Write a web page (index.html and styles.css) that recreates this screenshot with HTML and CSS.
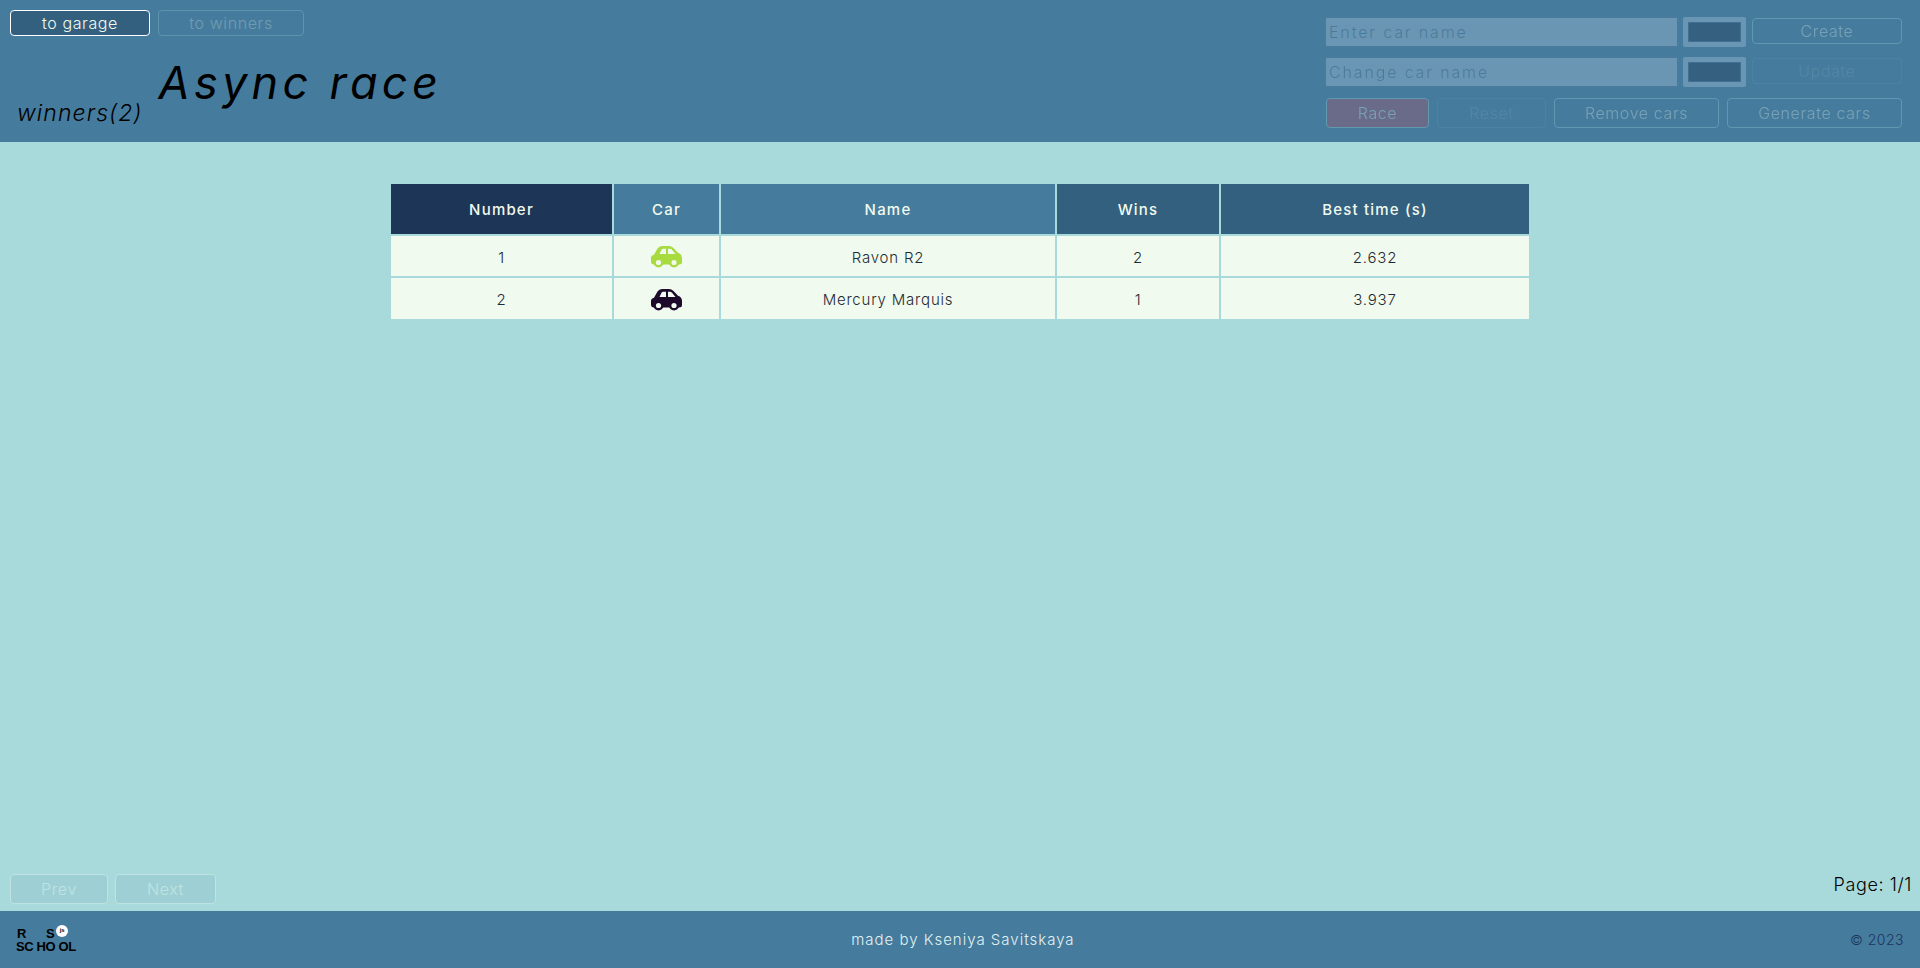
FILE: index.html
```html
<!DOCTYPE html>
<html lang="en">
<head>
    <meta charset="UTF-8">
    <meta name="viewport" content="width=device-width, initial-scale=1.0">
    <title>Async race</title>
    <link rel="stylesheet" href="styles.css">
</head>
<body>
    <header class="header">
        <div class="header-left">
            <nav class="nav">
                <button class="btn btn-garage">to garage</button>
                <button class="btn btn-winners" disabled>to winners</button>
            </nav>
            <div class="titles">
                <h2 class="page-title">winners(2)</h2>
                <h1 class="main-title">Async race</h1>
            </div>
        </div>
        <div class="controls">
            <div class="control-row">
                <input class="car-input" type="text" placeholder="Enter car name">
                <span class="color-box"><span class="color-fill"></span></span>
                <button class="btn btn-side">Create</button>
            </div>
            <div class="control-row">
                <input class="car-input" type="text" placeholder="Change car name">
                <span class="color-box"><span class="color-fill"></span></span>
                <button class="btn btn-side btn-off">Update</button>
            </div>
            <div class="action-row">
                <button class="btn btn-race">Race</button>
                <button class="btn btn-reset btn-off">Reset</button>
                <button class="btn btn-remove">Remove cars</button>
                <button class="btn btn-generate">Generate cars</button>
            </div>
        </div>
    </header>
    <main class="main">
        <table class="winners">
            <thead>
                <tr>
                    <th class="col-number">Number</th>
                    <th class="col-car">Car</th>
                    <th class="col-name">Name</th>
                    <th class="col-wins">Wins</th>
                    <th class="col-time">Best time (s)</th>
                </tr>
            </thead>
            <tbody>
                <tr>
                    <td>1</td>
                    <td>
                        <svg class="car car-green" viewBox="0 0 31 22">
                            <path class="car-body" d="M3 18.500Q0 18.500 0 15.500V12Q0 9.500 3 8.800L6.500 2.500Q8 0 11 0H18Q20.500 0 22.500 2L27 6.800Q31 8 31 12V16Q31 18.500 28 18.500Z"/>
                            <path class="car-glass" d="M8.500 8L10.500 3.800Q11 2.800 12 2.800H15V8ZM17 2.800H19Q20 2.800 20.800 3.600L24.500 8H17Z"/>
                            <circle class="car-body" cx="7.500" cy="16.500" r="5"/>
                            <circle class="car-body" cx="23" cy="16.500" r="5"/>
                            <circle class="car-glass" cx="7.500" cy="16.500" r="2.600"/>
                            <circle class="car-glass" cx="23" cy="16.500" r="2.600"/>
                        </svg>
                    </td>
                    <td>Ravon R2</td>
                    <td>2</td>
                    <td>2.632</td>
                </tr>
                <tr>
                    <td>2</td>
                    <td>
                        <svg class="car car-dark" viewBox="0 0 31 22">
                            <path class="car-body" d="M3 18.500Q0 18.500 0 15.500V12Q0 9.500 3 8.800L6.500 2.500Q8 0 11 0H18Q20.500 0 22.500 2L27 6.800Q31 8 31 12V16Q31 18.500 28 18.500Z"/>
                            <path class="car-glass" d="M8.500 8L10.500 3.800Q11 2.800 12 2.800H15V8ZM17 2.800H19Q20 2.800 20.800 3.600L24.500 8H17Z"/>
                            <circle class="car-body" cx="7.500" cy="16.500" r="5"/>
                            <circle class="car-body" cx="23" cy="16.500" r="5"/>
                            <circle class="car-glass" cx="7.500" cy="16.500" r="2.600"/>
                            <circle class="car-glass" cx="23" cy="16.500" r="2.600"/>
                        </svg>
                    </td>
                    <td>Mercury Marquis</td>
                    <td>1</td>
                    <td>3.937</td>
                </tr>
            </tbody>
        </table>
        <div class="pager">
            <div class="pager-buttons">
                <button class="btn btn-page btn-prev" disabled>Prev</button>
                <button class="btn btn-page btn-next" disabled>Next</button>
            </div>
            <span class="page-count">Page: 1/1</span>
        </div>
    </main>
    <footer class="footer">
        <div class="logo">
            <div class="logo-line logo-top"><span>R</span><span>S</span><span class="logo-badge">js</span></div>
            <div class="logo-line"><span>SC</span><span>HO</span><span>OL</span></div>
        </div>
        <span class="made-by">made by Kseniya Savitskaya</span>
        <span class="copy">© 2023</span>
    </footer>
</body>
</html>
```

FILE: styles.css
```css
* {
    box-sizing: border-box;
}
body {
    font-family: "Inter", "Liberation Sans", sans-serif;
    margin: 0;
    height: 968px;
    display: flex;
    flex-direction: column;
    background-color: #a8dadc;
    color: #1d3557;
}
button, input {
    font-family: inherit;
}
.header {
    height: 142px;
    flex: none;
    background-color: #457b9d;
    display: flex;
    justify-content: space-between;
}
.header-left {
    padding: 10px 0 0 10px;
}
.nav {
    display: flex;
    gap: 8px;
}
.btn {
    height: 26px;
    padding: 0;
    border: 1px solid #a8dadc;
    border-radius: 4px;
    background: transparent;
    color: #f1faee;
    font-size: 16px;
    font-weight: 300;
    letter-spacing: 0.6px;
}
.btn-garage {
    width: 140px;
    background-color: #34607f;
    border-color: #fff;
}
.btn-winners {
    width: 146px;
    opacity: 0.25;
}
.titles {
    display: flex;
    align-items: flex-end;
    gap: 16px;
    margin-top: 19px;
}
.page-title {
    margin: 0 0 1px 7px;
    font-size: 23px;
    font-weight: 300;
    font-style: italic;
    letter-spacing: 1.1px;
    color: #000;
}
.main-title {
    margin: 0 0 17px;
    font-size: 45px;
    font-weight: 400;
    font-style: italic;
    letter-spacing: 4.3px;
    line-height: 56px;
    color: #000;
}
.controls {
    width: 577px;
    margin-right: 18px;
    padding-top: 17px;
    display: flex;
    flex-direction: column;
    gap: 10px;
    opacity: 0.3;
}
.control-row {
    display: flex;
    height: 30px;
    gap: 5px;
}
.car-input {
    width: 353px;
    height: 30px;
    padding: 0 3px;
    border: 1px solid #5a7d9a;
    background-color: #c5d8e6;
    font-size: 16px;
    font-weight: 300;
    letter-spacing: 1.85px;
}
.car-input::placeholder {
    color: #5a7d9a;
    opacity: 1;
}
.color-box {
    width: 63px;
    height: 30px;
    padding: 5px;
    border-radius: 2px;
    background-color: #c5d8e6;
}
.color-fill {
    display: block;
    height: 20px;
    border: 1px solid #3b5b7b;
    background-color: #142439;
}
.btn-side {
    width: 150px;
    margin-left: 1px;
    margin-top: 1px;
}
.btn-off {
    opacity: 0.3;
}
.action-row {
    display: flex;
    gap: 8px;
    padding-left: 1px;
    margin-top: 1px;
}
.action-row .btn {
    height: 30px;
}
.btn-race {
    width: 103px;
    background-color: #be465d;
}
.btn-reset {
    width: 109px;
}
.btn-remove {
    width: 165px;
}
.btn-generate {
    width: 175px;
}
.main {
    flex: 1;
    display: flex;
    flex-direction: column;
    padding-top: 42px;
}
.winners {
    width: 1138px;
    margin: 0 auto;
    border-collapse: collapse;
    table-layout: fixed;
    font-size: 15px;
    letter-spacing: 0.8px;
}
.winners th, .winners td {
    border: 2px solid #a8dadc;
    text-align: center;
    padding: 0;
}
.winners tr:first-child th {
    border-top: 0;
}
.winners tr:last-child td {
    border-bottom: 0;
}
.winners th:first-child, .winners td:first-child {
    border-left: 0;
}
.winners th:last-child, .winners td:last-child {
    border-right: 0;
}
.winners th {
    height: 51px;
    color: #f1faee;
    font-weight: 500;
    letter-spacing: 1.2px;
}
.winners td {
    height: 42px;
    padding-top: 2px;
    background-color: #f1faee;
    font-weight: 300;
    color: #1d2a35;
}
.col-number {
    width: 222px;
    background-color: #1d3557;
}
.col-car {
    width: 107px;
    background-color: #457b9d;
}
.col-name {
    width: 336px;
    background-color: #457b9d;
}
.col-wins {
    width: 164px;
    background-color: #34607f;
}
.col-time {
    background-color: #34607f;
}
.car {
    display: block;
    width: 31px;
    height: 22px;
    margin: 0 auto;
}
.car-green .car-body {
    fill: #a7db3f;
}
.car-dark .car-body {
    fill: #1d0a2b;
}
.car-glass {
    fill: #f1faee;
}
.pager {
    margin-top: auto;
    padding: 0 8px 7px 10px;
    display: flex;
    justify-content: space-between;
    align-items: flex-start;
}
.pager-buttons {
    display: flex;
    gap: 7px;
}
.btn-page {
    height: 30px;
    opacity: 0.3;
    background-color: #8ab8c4;
    border-color: #f1faee;
}
.btn-prev {
    width: 98px;
}
.btn-next {
    width: 101px;
}
.page-count {
    font-size: 18px;
    font-weight: 300;
    letter-spacing: 0.6px;
    color: #000;
}
.footer {
    height: 57px;
    flex: none;
    background-color: #457b9d;
    display: flex;
    justify-content: space-between;
    align-items: center;
    padding: 0 16px;
}
.logo {
    font-family: "Liberation Sans", sans-serif;
    font-size: 13px;
    font-weight: 700;
    line-height: 13px;
    color: #000;
}
.logo-line {
    display: flex;
    gap: 3px;
    letter-spacing: -0.3px;
}
.logo-top {
    position: relative;
    gap: 20px;
    padding-left: 1px;
}
.logo-badge {
    position: absolute;
    left: 40px;
    top: -2px;
    width: 12px;
    height: 12px;
    border-radius: 50%;
    background-color: #fff;
    font-size: 6px;
    line-height: 11px;
    text-align: center;
}
.made-by {
    font-size: 15px;
    font-weight: 300;
    letter-spacing: 1px;
    color: #e0f2f1;
}
.copy {
    font-size: 14px;
    font-weight: 300;
    letter-spacing: 0.5px;
    color: #1d3557;
}
```
